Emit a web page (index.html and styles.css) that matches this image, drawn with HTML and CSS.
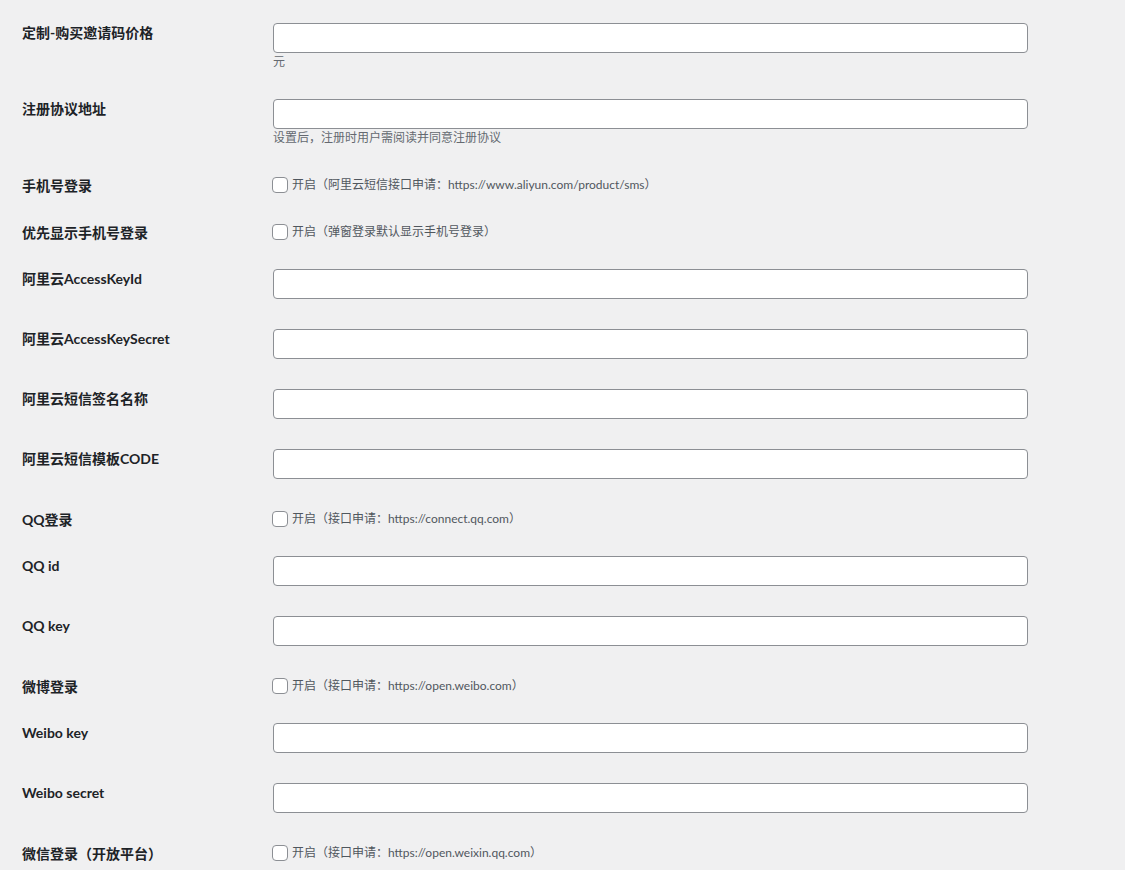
FILE: index.html
```html
<!DOCTYPE html>
<html lang="zh-CN">
<head>
<meta charset="utf-8">
<title>设置</title>
<link rel="stylesheet" href="styles.css">
</head>
<body>
<div class="form">
  <div class="row">
    <div class="label">定制-购买邀请码价格</div>
    <div class="field"><input class="text" type="text"><p class="desc">元</p></div>
  </div>
  <div class="row">
    <div class="label">注册协议地址</div>
    <div class="field"><input class="text" type="text"><p class="desc">设置后，注册时用户需阅读并同意注册协议</p></div>
  </div>
  <div class="row check">
    <div class="label">手机号登录</div>
    <div class="field"><label class="cb"><span class="box"></span>开启（阿里云短信接口申请：https://www.aliyun.com/product/sms）</label></div>
  </div>
  <div class="row check">
    <div class="label">优先显示手机号登录</div>
    <div class="field"><label class="cb"><span class="box"></span>开启（弹窗登录默认显示手机号登录）</label></div>
  </div>
  <div class="row">
    <div class="label">阿里云AccessKeyId</div>
    <div class="field"><input class="text" type="text"></div>
  </div>
  <div class="row">
    <div class="label">阿里云AccessKeySecret</div>
    <div class="field"><input class="text" type="text"></div>
  </div>
  <div class="row">
    <div class="label">阿里云短信签名名称</div>
    <div class="field"><input class="text" type="text"></div>
  </div>
  <div class="row">
    <div class="label">阿里云短信模板CODE</div>
    <div class="field"><input class="text" type="text"></div>
  </div>
  <div class="row check">
    <div class="label">QQ登录</div>
    <div class="field"><label class="cb"><span class="box"></span>开启（接口申请：https://connect.qq.com）</label></div>
  </div>
  <div class="row">
    <div class="label">QQ id</div>
    <div class="field"><input class="text" type="text"></div>
  </div>
  <div class="row">
    <div class="label">QQ key</div>
    <div class="field"><input class="text" type="text"></div>
  </div>
  <div class="row check">
    <div class="label">微博登录</div>
    <div class="field"><label class="cb"><span class="box"></span>开启（接口申请：https://open.weibo.com）</label></div>
  </div>
  <div class="row">
    <div class="label">Weibo key</div>
    <div class="field"><input class="text" type="text"></div>
  </div>
  <div class="row">
    <div class="label">Weibo secret</div>
    <div class="field"><input class="text" type="text"></div>
  </div>
  <div class="row check">
    <div class="label">微信登录（开放平台）</div>
    <div class="field"><label class="cb"><span class="box"></span>开启（接口申请：https://open.weixin.qq.com）</label></div>
  </div>
</div>
</body>
</html>
```
FILE: styles.css
```css
html, body {
  margin: 0;
  padding: 0;
  background: #f0f0f1;
  height: 100%;
  overflow: hidden;
}
body {
  font-family: "Lato", "Noto Sans CJK SC", sans-serif;
  color: #1d2327;
}
.form {
  padding: 23px 0 0 22px;
}
.row {
  display: flex;
  align-items: flex-start;
  padding-bottom: 30px;
}
.row.check {
  padding-top: 1px;
  padding-bottom: 27px;
}
.label {
  width: 251px;
  flex: none;
  font-size: 14px;
  font-weight: 700;
  line-height: 18px;
  padding-top: 1px;
  color: #1d2327;
}
.field {
  flex: none;
  width: 755px;
}
.text {
  display: block;
  box-sizing: border-box;
  width: 755px;
  height: 30px;
  margin: 0;
  border: 1px solid #8c8f94;
  border-radius: 4px;
  background: #fff;
  padding: 0 8px;
  font: inherit;
}
.desc {
  margin: 0;
  padding-top: 1px;
  font-size: 12px;
  line-height: 15px;
  color: #646970;
}
.cb {
  display: flex;
  align-items: center;
  margin-left: -1px;
  font-size: 12px;
  line-height: 17px;
  height: 17px;
  color: #50575e;
}
.box {
  display: inline-block;
  box-sizing: border-box;
  width: 16px;
  height: 16px;
  border: 1px solid #8c8f94;
  border-radius: 4px;
  background: #fff;
  margin-right: 4px;
  flex: none;
}
```
